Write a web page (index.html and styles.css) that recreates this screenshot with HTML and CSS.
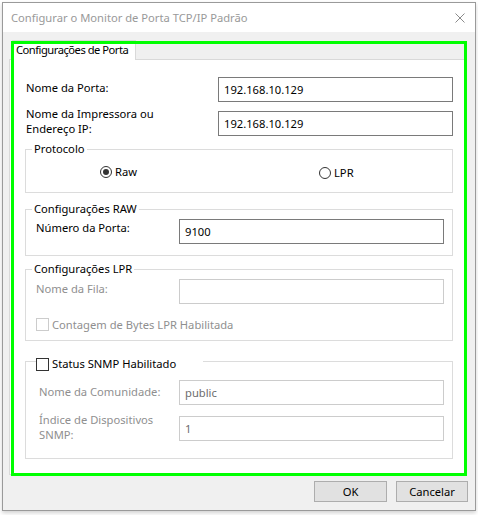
FILE: index.html
```html
<!DOCTYPE html>
<html lang="pt">
<head>
<meta charset="utf-8">
<title>Configurar o Monitor de Porta TCP/IP Padrão</title>
<link rel="stylesheet" href="styles.css">
</head>
<body>
<div class="screen">
  <div class="dialog">
    <div class="titlebar">
      <span class="title">Configurar o Monitor de Porta TCP/IP Padrão</span>
      <svg class="close" width="10" height="10" viewBox="0 0 10 10"><path d="M0.5 0.5 L9.5 9.5 M9.5 0.5 L0.5 9.5" stroke="#8a8a8a" stroke-width="1" fill="none"/></svg>
    </div>
    <div class="body">
      <div class="tabs"><div class="tab">Configurações de Porta</div></div>
      <div class="panel">
        <div class="rows">
          <label class="lbl l1">Nome da Porta:</label>
          <input class="field" type="text" value="192.168.10.129">
          <label class="lbl l2">Nome da Impressora ou<br>Endereço IP:</label>
          <input class="field" type="text" value="192.168.10.129">
        </div>

        <fieldset class="group g-proto">
          <legend>Protocolo</legend>
          <div class="radio-row">
            <span class="radio r-raw"><span class="circle on"></span>Raw</span>
            <span class="radio r-lpr"><span class="circle"></span>LPR</span>
          </div>
        </fieldset>

        <fieldset class="group g-raw">
          <legend>Configurações RAW</legend>
          <div class="grid">
            <span class="glbl">Número da Porta:</span>
            <input class="field" type="text" value="9100">
          </div>
        </fieldset>

        <fieldset class="group g-lpr">
          <legend>Configurações LPR</legend>
          <div class="grid">
            <span class="glbl dis">Nome da Fila:</span>
            <input class="field dis" type="text" value="" disabled>
          </div>
          <div class="check-row dis"><span class="box dis"></span>Contagem de Bytes LPR Habilitada</div>
        </fieldset>

        <fieldset class="group g-snmp">
          <legend class="check-legend"><span class="box"></span>Status SNMP Habilitado</legend>
          <div class="grid">
            <span class="glbl dis ind">Nome da Comunidade:</span>
            <input class="field dis" type="text" value="public" disabled>
          </div>
          <div class="grid g2">
            <span class="glbl dis ind multi">Índice de Dispositivos<br>SNMP:</span>
            <input class="field dis" type="text" value="1" disabled>
          </div>
        </fieldset>
      </div>
      <div class="buttons">
        <button class="btn">OK</button>
        <button class="btn btn-cancel">Cancelar</button>
      </div>
    </div>
    <div class="highlight"></div>
  </div>
</div>
</body>
</html>
```

FILE: styles.css
```css
* { box-sizing: border-box; }
html, body { margin: 0; padding: 0; }
body {
  background: #ffffff;
  font-family: "Noto Sans", "Open Sans", sans-serif;
  font-size: 11.2px;
  color: #000;
  width: 478px;
  height: 515px;
  overflow: hidden;
}
.screen { padding: 2px 2px 0 2px; }
.dialog {
  position: relative;
  width: 474px;
  height: 509px;
  border: 1px solid #9a9a9a;
  background: #f0f0f0;
  box-shadow: 0 2px 4px rgba(0,0,0,0.18);
  display: flex;
  flex-direction: column;
}
.titlebar {
  height: 29px;
  background: #fff;
  display: flex;
  align-items: center;
  justify-content: space-between;
  padding: 0 10px 0 8px;
}
.title { color: #999; line-height: 16px; }
.close { display: block; }
.body {
  flex: 1;
  display: flex;
  flex-direction: column;
  padding: 8px 8px 0 6px;
}
.tabs { display: flex; padding-left: 3px; position: relative; z-index: 1; margin-bottom: -1px; }
.tab {
  width: 124px;
  height: 20px;
  background: #fff;
  border: 1px solid #d9d9d9;
  border-bottom: none;
  padding-left: 3px;
  line-height: 17px;
  letter-spacing: -0.5px;
  white-space: nowrap;
  overflow: hidden;
}
.panel {
  height: 416px;
  background: #fff;
  border: 1px solid #d9d9d9;
  padding: 17px 13px 0 15px;
}
.rows {
  display: grid;
  grid-template-columns: 193px 1fr;
  row-gap: 9px;
  align-items: start;
}
.lbl { padding-left: 1px; line-height: 15px; }
.l1 { margin-top: 3px; }
.l2 { margin-top: -5px; }
.field {
  display: block;
  width: 100%;
  height: 25px;
  margin: 0;
  border: 1px solid #7a7a7a;
  background: #fff;
  padding: 0 5px;
  font: inherit;
  color: #000;
  outline: none;
}
.field.dis { border-color: #cccccc; color: #6d6d6d; -webkit-text-fill-color: #6d6d6d; }

.group {
  margin: 0;
  border: 1px solid #dcdcdc;
  padding: 0 8px 0 10px;
  min-width: 0;
}
.group legend {
  margin-left: -4px;
  padding: 0 2px;
  line-height: 16px;
}
.g-proto { margin-top: 5px; padding-top: 7px; padding-bottom: 12px; }
.radio-row { display: flex; padding-left: 64px; height: 16px; }
.radio { display: flex; align-items: center; line-height: 16px; }
.r-raw { width: 219px; }
.r-lpr { margin-top: 2px; }
.circle {
  width: 12px; height: 12px;
  border: 1px solid #333;
  border-radius: 50%;
  margin-right: 3px;
  position: relative;
  background: #fff;
}
.circle.on::after {
  content: "";
  position: absolute;
  left: 2px; top: 2px;
  width: 6px; height: 6px;
  border-radius: 50%;
  background: #333;
}

.grid {
  display: grid;
  grid-template-columns: 143px 1fr;
  align-items: start;
}
.glbl { line-height: 15px; margin-top: 1px; }
.glbl.dis { color: #8f8f8f; }
.glbl.ind { padding-left: 3px; }

.g-raw { margin-top: 8px; padding-top: 2px; padding-bottom: 11px; }
.g-lpr { margin-top: 5px; padding-top: 2px; padding-bottom: 8px; }
.g-lpr .glbl { margin-top: 2px; }
.check-row { display: flex; align-items: center; margin-top: 13px; line-height: 15px; height: 15px; }
.check-row.dis { color: #8f8f8f; }
.box {
  width: 13px; height: 13px;
  border: 1px solid #333;
  background: #fff;
  margin-right: 3px;
  flex: none;
}
.box.dis { border-color: #cccccc; }

.g-snmp { margin-top: 9px; padding-top: 8px; padding-bottom: 16px; }
.g-snmp legend.check-legend {
  margin-left: 0;
  padding: 6px 0 0 0;
  width: 167px;
  display: flex;
  align-items: center;
  line-height: 16px;
}
.g-snmp .glbl { margin-top: 4px; }
.g-snmp .glbl.multi { margin-top: -4px; }
.g2 { margin-top: 11px; }

.buttons {
  display: flex;
  justify-content: flex-end;
  gap: 9px;
  margin-top: 6px;
  margin-right: -1px;
}
.btn {
  width: 73px;
  height: 21px;
  border: 1px solid #adadad;
  background: #e1e1e1;
  font: inherit;
  color: #000;
  padding: 0;
  margin: 0;
}
.btn-cancel { width: 72px; }

.highlight {
  position: absolute;
  left: 8px;
  top: 38px;
  width: 456px;
  height: 435px;
  border: 3px solid #00ff00;
  pointer-events: none;
  z-index: 2;
}
```
